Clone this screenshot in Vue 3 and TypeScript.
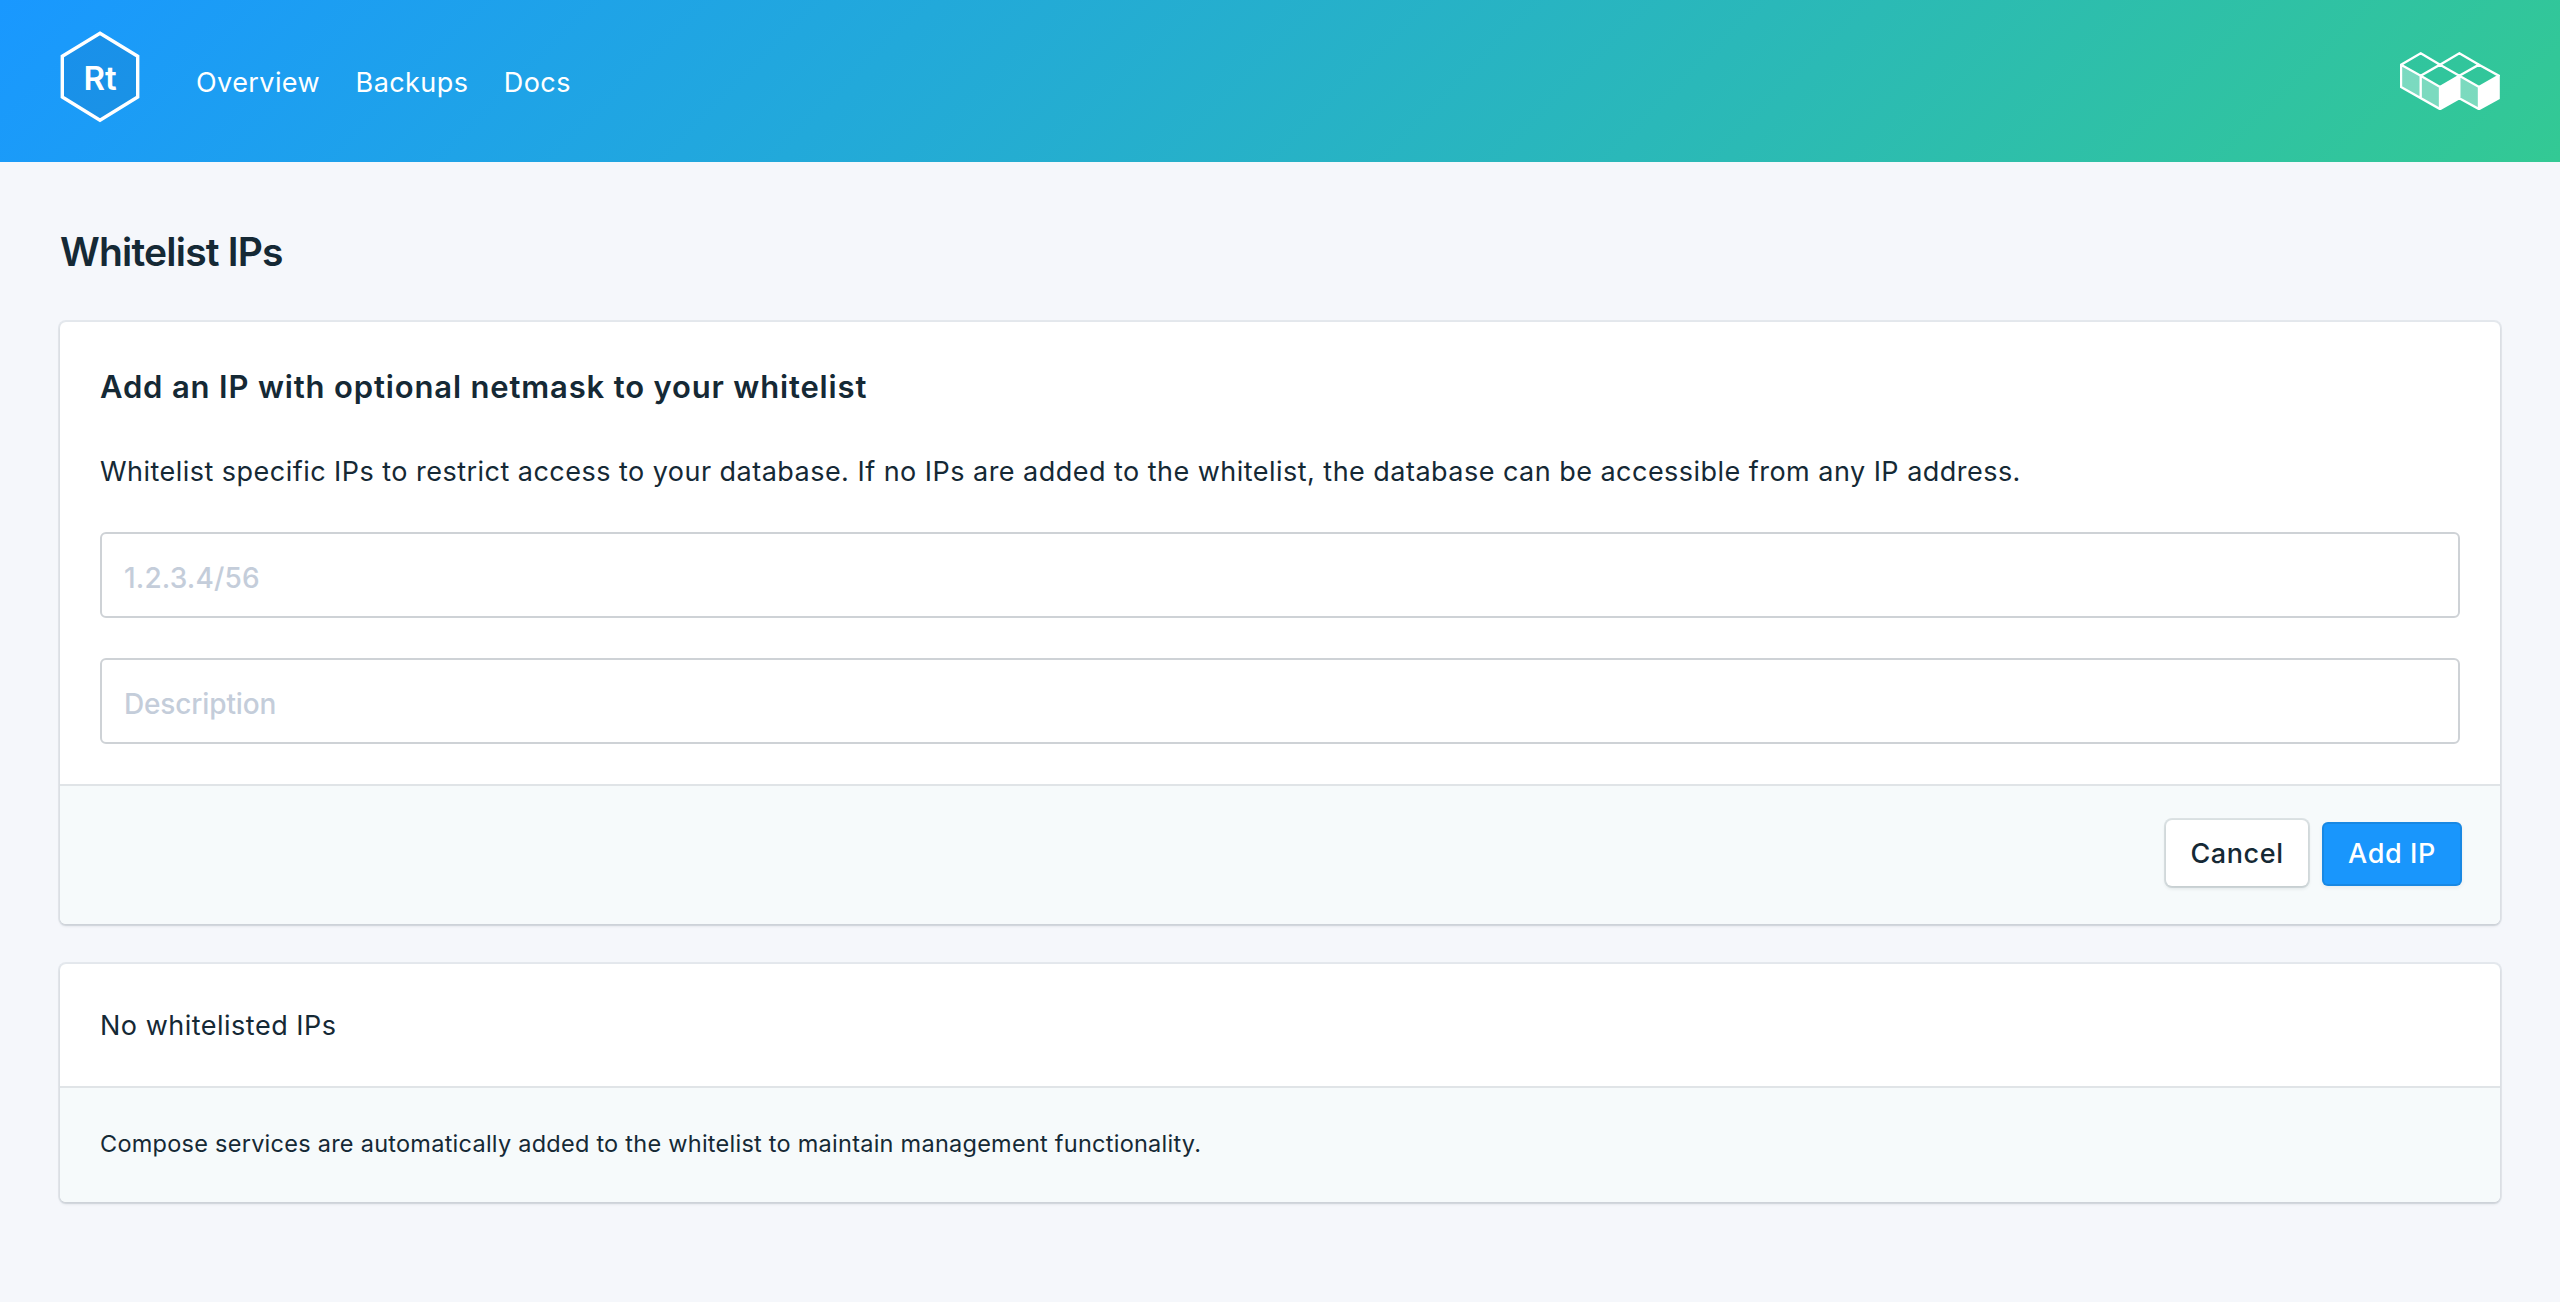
<script setup lang="ts">
import { ref } from 'vue'

const links: string[] = ['Overview', 'Backups', 'Docs']
const ip = ref('')
const description = ref('')
</script>

<template>
  <div class="page">
    <header class="topbar">
      <svg class="hex" width="80" height="92" viewBox="0 0 80 92">
        <path d="M40 2.3 77.7 25.3V66L40 89.2 2.3 66V25.3Z" fill="rgba(21,41,53,.08)" stroke="#fff" stroke-width="3.4" />
        <text x="40.2" y="58.5" text-anchor="middle">Rt</text>
      </svg>
      <nav class="nav">
        <a v-for="link in links" :key="link">{{ link }}</a>
      </nav>
      <svg class="cubes" width="100" height="58.3" viewBox="12 17 300 175">
        <g fill="#fff" fill-opacity=".36">
          <path d="M15 55 74 88V156L15 121Z" />
          <path d="M74 88 132 122V188L74 156Z" />
          <path d="M190 88 249 122V188L190 156Z" />
        </g>
        <g fill="#fff">
          <path d="M132 122 190 88V156L132 188Z" />
          <path d="M249 122 308 88V156L249 188Z" />
        </g>
        <path
          d="M74 21 132 55 74 88 15 55ZM190 21 249 55 190 88 132 55ZM132 55 190 88 132 122 74 88ZM249 55 308 88 249 122 190 88ZM15 55V122L132 188.500 190 156 249 188.500 308 156V88M74 88V156M132 122V188M190 88V156M249 122V188"
          fill="none" stroke="#fff" stroke-width="7"
        />
      </svg>
    </header>

    <main class="main">
      <h1>Whitelist IPs</h1>

      <section class="card">
        <div class="form">
          <h2>Add an IP with optional netmask to your whitelist</h2>
          <p>Whitelist specific IPs to restrict access to your database. If no IPs are added to the whitelist, the database can be accessible from any IP address.</p>
          <input v-model="ip" class="ip" type="text" placeholder="1.2.3.4/56">
          <input v-model="description" type="text" placeholder="Description">
        </div>
        <div class="actions">
          <button class="btn cancel" type="button">Cancel</button>
          <button class="btn add" type="button">Add IP</button>
        </div>
      </section>

      <section class="card">
        <div class="empty">No whitelisted IPs</div>
        <div class="note">Compose services are automatically added to the whitelist to maintain management functionality.</div>
      </section>
    </main>
  </div>
</template>

<style>
body {
  margin: 0;
  background: #f5f7fb;
}
</style>

<style scoped>
.page {
  min-height: 1302px;
  box-sizing: border-box;
  background: #f5f7fb;
  color: #152935;
  font-family: Inter, "Liberation Sans", sans-serif;
  font-size: 27px;
}
.topbar {
  display: flex;
  align-items: center;
  box-sizing: border-box;
  height: 162px;
  padding: 0 60px;
  background: linear-gradient(135deg, #1998ff 0%, #33c994 100%);
  color: #fff;
}
.hex {
  margin-bottom: 9px;
}
.hex text {
  fill: #fff;
  font-size: 33px;
  font-weight: 600;
}
.nav {
  display: flex;
  gap: 35.500px;
  margin-left: 56px;
  padding-top: 4px;
  line-height: 40px;
  letter-spacing: 0.42px;
}
.cubes {
  margin-left: auto;
}
.main {
  padding: 66px 60px 0;
}
h1 {
  margin: 0 0 46px;
  font-size: 39px;
  font-weight: 600;
  line-height: 48px;
  letter-spacing: -0.8px;
}
.card {
  margin-bottom: 40px;
  border-radius: 6px;
  background: #fff;
  box-shadow: 0 0 0 2px rgba(21, 41, 53, 0.07), 0 2px 3px rgba(21, 41, 53, 0.13);
}
.form {
  padding: 45px 40px 40px;
}
h2 {
  margin: 0 0 44px;
  font-size: 31px;
  font-weight: 600;
  line-height: 40px;
  letter-spacing: 0.84px;
}
p {
  margin: 0 0 39px;
  line-height: 42px;
  letter-spacing: 0.468px;
}
input {
  display: block;
  box-sizing: border-box;
  width: 100%;
  height: 86px;
  padding: 6px 22px 0;
  border: 2px solid #ced2d6;
  border-radius: 6px;
  outline: none;
  background: #fff;
  color: #152935;
  font-family: inherit;
  font-size: 28px;
  font-weight: 500;
  letter-spacing: -0.15px;
}
input.ip {
  margin-bottom: 40px;
  letter-spacing: 0.15px;
}
input::placeholder {
  color: #c4cdda;
  opacity: 1;
}
.actions {
  display: flex;
  justify-content: flex-end;
  align-items: flex-end;
  gap: 14px;
  box-sizing: border-box;
  height: 140px;
  padding: 0 38px 38px;
  border-top: 2px solid #e0e4e7;
  border-radius: 0 0 6px 6px;
  background: #f6fafb;
}
.btn {
  height: 64px;
  padding: 0;
  border: 0;
  border-radius: 6px;
  font-family: inherit;
  font-size: 27px;
  font-weight: 500;
  line-height: 64px;
  letter-spacing: 0.6px;
}
.cancel {
  width: 142px;
  height: 66px;
  padding-top: 2px;
  background: #fff;
  color: #152935;
  box-shadow: 0 0 0 2px rgba(21, 41, 53, 0.11), 0 2px 4px rgba(21, 41, 53, 0.14);
}
.add {
  width: 140px;
  background: #1996fc;
  color: #fff;
  box-shadow: inset 0 0 0 2px rgba(21, 41, 53, 0.12), 0 2px 4px rgba(21, 41, 53, 0.06);
}
.empty {
  box-sizing: border-box;
  height: 122px;
  padding: 0 40px;
  line-height: 124px;
  letter-spacing: 0.5px;
}
.note {
  box-sizing: border-box;
  height: 116px;
  padding: 0 40px;
  border-top: 2px solid #e0e4e7;
  border-radius: 0 0 6px 6px;
  background: #f6fafb;
  font-size: 23.500px;
  line-height: 111px;
  letter-spacing: 0.254px;
}
</style>
